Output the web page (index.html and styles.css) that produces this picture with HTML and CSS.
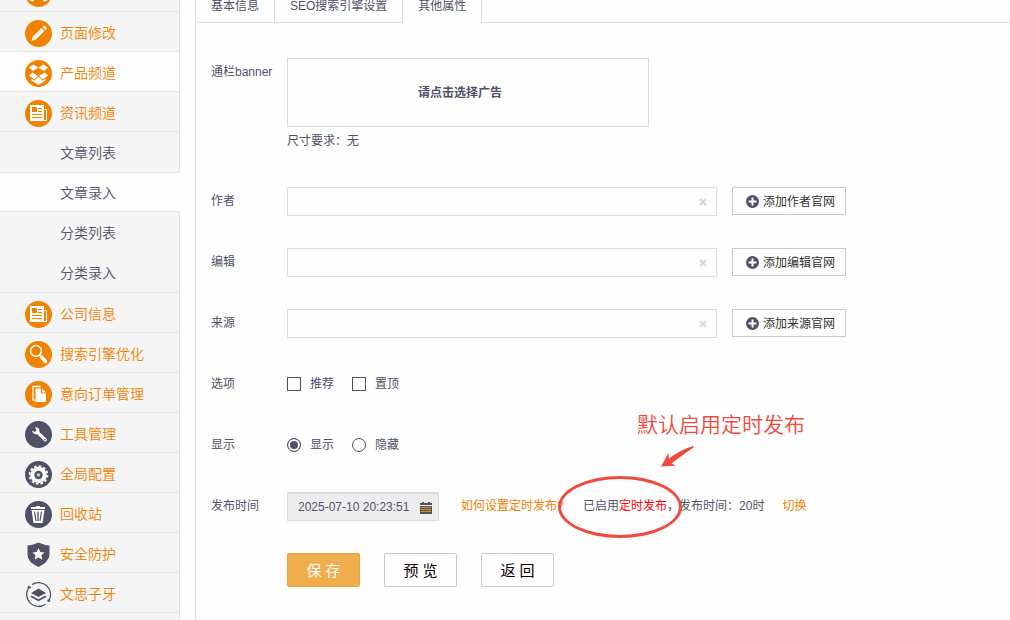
FILE: index.html
```html
<!DOCTYPE html>
<html lang="zh-CN">
<head>
    <meta charset="UTF-8">
    <meta name="viewport" content="width=device-width, initial-scale=1.0">
    <title>文章录入</title>
    <link rel="stylesheet" href="styles.css">
</head>
<body>
    <div class="page">
        <nav class="sidebar">
            <a class="nav-item" href="#">
                <svg class="nav-icon" viewBox="0 0 27 27"><circle cx="13.5" cy="13.5" r="13.5" fill="#ef8200"/><path d="M7 21l4-4h5l4 4M5 20h4M18 20h4" fill="none" stroke="#fff" stroke-width="2"/></svg>
            </a>
            <a class="nav-item" href="#">
                <svg class="nav-icon" viewBox="0 0 27 27"><circle cx="13.5" cy="13.5" r="13.5" fill="#ef8200"/><path d="M6.500 21l1-4.200L16.500 8l3 3-9 8.800zM17.500 7l1-1q.8-.6 1.600 0l1.300 1.300q.7.8 0 1.600l-1 1z" fill="#fff"/><path d="M9 17.500l8-8" stroke="#f7b868" stroke-width=".7"/><path d="M7.500 17l2.700 2.700" stroke="#ef8200" stroke-width=".5"/></svg>
                <span>页面修改</span>
            </a>
            <a class="nav-item nav-item-hover" href="#">
                <svg class="nav-icon" viewBox="0 0 27 27"><circle cx="13.5" cy="13.5" r="13.5" fill="#ef8200"/><path d="M8.500 4.500l5 3.200-5.500 3.300-4-3.500zM18.500 4.500l-5 3.200 5.500 3.300 4-3.500zM7.500 12.500l5.500 3.500-4 3.500-5-4zM19.500 12.500L14 16l4 3.500 5-4zM6.500 18.800l2.500 2 4.500-4 4.500 4 2.500-2v1.700l-7 4.500-7-4.500z" fill="#fff"/></svg>
                <span>产品频道</span>
            </a>
            <a class="nav-item" href="#">
                <svg class="nav-icon" viewBox="0 0 27 27"><circle cx="13.5" cy="13.5" r="13.5" fill="#ef8200"/><path d="M5 5h14v16H5z" fill="#fff"/><path d="M19.500 9.500h2V20.500H5" fill="none" stroke="#fff"/><path d="M7 7h5v5H7zM13 8h4v1h-4zM13 11h4v1h-4zM7 14h10v1H7zM7 17h10v1H7z" fill="#ef8200"/></svg>
                <span>资讯频道</span>
            </a>
            <div class="sub-menu">
                <a class="sub-item" href="#">文章列表</a>
                <a class="sub-item sub-item-active" href="#">文章录入</a>
                <a class="sub-item" href="#">分类列表</a>
                <a class="sub-item" href="#">分类录入</a>
            </div>
            <a class="nav-item" href="#">
                <svg class="nav-icon" viewBox="0 0 27 27"><circle cx="13.5" cy="13.5" r="13.5" fill="#ef8200"/><path d="M5 5h14v16H5z" fill="#fff"/><path d="M19.500 9.500h2V20.500H5" fill="none" stroke="#fff"/><path d="M7 7h5v5H7zM13 8h4v1h-4zM13 11h4v1h-4zM7 14h10v1H7zM7 17h10v1H7z" fill="#ef8200"/></svg>
                <span>公司信息</span>
            </a>
            <a class="nav-item" href="#">
                <svg class="nav-icon" viewBox="0 0 27 27"><circle cx="13.5" cy="13.5" r="13.5" fill="#ef8200"/><circle cx="11" cy="10" r="5.400" fill="none" stroke="#fff" stroke-width="1.500"/><path d="M14.500 14l3 3" stroke="#fff" stroke-width="1.500"/><path d="M16.500 16l4 4.500" stroke="#fff" stroke-width="3.500" stroke-linecap="round"/></svg>
                <span>搜索引擎优化</span>
            </a>
            <a class="nav-item" href="#">
                <svg class="nav-icon" viewBox="0 0 27 27"><circle cx="13.5" cy="13.5" r="13.5" fill="#ef8200"/><path d="M15.500 5.500H8v13.500h2" fill="none" stroke="#fff" stroke-width="1.300"/><path d="M10.500 7.500H16v5h5V21H10.500zM17 7.500l4 4h-4z" fill="#fff"/></svg>
                <span>意向订单管理</span>
            </a>
            <a class="nav-item" href="#">
                <svg class="nav-icon" viewBox="0 0 27 27"><circle cx="13.5" cy="13.5" r="13.5" fill="#4f5267"/><path d="M10 6.200q3.800-.2 4.500 3.300l-.2 1.500 7 6.500q1.200 1.300.2 2.500t-2.500 0L12.300 13.200Q8 14 7 9.500l3 1.500 1.600-1.800z" fill="#fff"/><circle cx="20" cy="18.800" r=".8" fill="#4f5267"/></svg>
                <span>工具管理</span>
            </a>
            <a class="nav-item" href="#">
                <svg class="nav-icon" viewBox="0 0 27 27"><circle cx="13.5" cy="13.5" r="13.5" fill="#4f5267"/><circle cx="13.5" cy="14" r="8.800" fill="none" stroke="#fff" stroke-width="2" stroke-dasharray="2.600 2"/><circle cx="13.5" cy="14" r="6.200" fill="none" stroke="#fff" stroke-width="4"/><circle cx="13.5" cy="14" r="1.800" fill="#c6c7cf"/></svg>
                <span>全局配置</span>
            </a>
            <a class="nav-item" href="#">
                <svg class="nav-icon" viewBox="0 0 27 27"><circle cx="13.5" cy="13.5" r="13.5" fill="#4f5267"/><path d="M6 6h5V5h4v1h5v2H6zM6.500 9h13l-2 13h-9z" fill="#fff"/><path d="M9.500 10.500l1.500 9.500M16.500 10.500L15 20" stroke="#4f5267" stroke-width="1.200"/><path d="M12 10.500h2V20h-2z" fill="#8b8d9b"/></svg>
                <span>回收站</span>
            </a>
            <a class="nav-item" href="#">
                <svg class="nav-icon" viewBox="0 0 27 27"><path d="M13.500 1.500Q19 4 24.500 4.500V14q-.5 7-11 12Q2.500 21 2.500 14V4.500Q8 4 13.500 1.500z" fill="#4f5267"/><path d="M13.500 7l1.800 3.900 4.200.5-3.100 2.900.8 4.200-3.700-2.100-3.700 2.100.8-4.200-3.100-2.900 4.200-.5z" fill="#fff"/></svg>
                <span>安全防护</span>
            </a>
            <a class="nav-item" href="#">
                <svg class="nav-icon" viewBox="0 0 27 27"><path d="M7 3.500a12 12 0 0 1 17.500 15M20.500 23.300A12 12 0 0 1 3.500 7" fill="none" stroke="#4f5267" stroke-width="1.300"/><circle cx="4.200" cy="6.300" r="1.500" fill="#4f5267"/><circle cx="23.800" cy="19.500" r="1.500" fill="#4f5267"/><path d="M13.500 7.500l7.500 4.500-7.500 4-7.500-4z" fill="#4f5267"/><path d="M6 15.300l7.500 4 7.500-4" fill="none" stroke="#4f5267" stroke-width="1.800"/></svg>
                <span>文思子牙</span>
            </a>
        </nav>

        <main class="main">
            <div class="tabs">
                <a class="tab" href="#">基本信息</a>
                <a class="tab" href="#">SEO搜索引擎设置</a>
                <a class="tab tab-active" href="#">其他属性</a>
            </div>

            <form class="form">
                <div class="form-row">
                    <span class="form-label">通栏banner</span>
                    <div>
                        <button type="button" class="banner-box">请点击选择广告</button>
                        <p class="hint">尺寸要求：无</p>
                    </div>
                </div>

                <div class="form-row">
                    <label class="form-label" for="author">作者</label>
                    <div class="input-wrap">
                        <input type="text" id="author" class="input">
                        <button type="button" class="clear" aria-label="清空"><svg viewBox="0 0 8 8"><path d="M1 1l6 6M7 1L1 7"/></svg></button>
                    </div>
                    <button type="button" class="btn-add"><svg class="plus" viewBox="0 0 13 13"><circle cx="6.5" cy="6.5" r="6.5"/><path d="M6.500 2.500v8M2.500 6.500h8"/></svg><span>添加作者官网</span></button>
                </div>

                <div class="form-row">
                    <label class="form-label" for="editor">编辑</label>
                    <div class="input-wrap">
                        <input type="text" id="editor" class="input">
                        <button type="button" class="clear" aria-label="清空"><svg viewBox="0 0 8 8"><path d="M1 1l6 6M7 1L1 7"/></svg></button>
                    </div>
                    <button type="button" class="btn-add"><svg class="plus" viewBox="0 0 13 13"><circle cx="6.5" cy="6.5" r="6.5"/><path d="M6.500 2.500v8M2.500 6.500h8"/></svg><span>添加编辑官网</span></button>
                </div>

                <div class="form-row">
                    <label class="form-label" for="source">来源</label>
                    <div class="input-wrap">
                        <input type="text" id="source" class="input">
                        <button type="button" class="clear" aria-label="清空"><svg viewBox="0 0 8 8"><path d="M1 1l6 6M7 1L1 7"/></svg></button>
                    </div>
                    <button type="button" class="btn-add"><svg class="plus" viewBox="0 0 13 13"><circle cx="6.5" cy="6.5" r="6.5"/><path d="M6.500 2.500v8M2.500 6.500h8"/></svg><span>添加来源官网</span></button>
                </div>

                <div class="form-row">
                    <span class="form-label">选项</span>
                    <label class="choice"><input type="checkbox" name="recommend">推荐</label>
                    <label class="choice"><input type="checkbox" name="top">置顶</label>
                </div>

                <div class="form-row">
                    <span class="form-label">显示</span>
                    <label class="choice"><input type="radio" name="show" value="1" checked>显示</label>
                    <label class="choice"><input type="radio" name="show" value="0">隐藏</label>
                </div>

                <div class="form-row">
                    <label class="form-label" for="publishTime">发布时间</label>
                    <div class="date-wrap">
                        <input type="text" id="publishTime" class="input input-date" value="2025-07-10 20:23:51">
                        <svg class="calendar" viewBox="0 0 12 12"><path d="M0 1h2V0h2v1h4V0h2v1h2v2H0z" fill="#4f5267"/><path d="M0 4h12v8H0z" fill="#5c5547"/><path d="M1 5.500h10M1 7.500h10M1 9.500h10" stroke="#e0a04a" stroke-width=".8"/></svg>
                    </div>
                    <a class="link link-help" href="#">如何设置定时发布?</a>
                    <div class="status">
                        已启用<span class="status-on">定时发布</span>，发布时间：20时
                        <div class="callout-text">默认启用定时发布</div>
                        <svg class="callout-arrow" viewBox="0 0 34 22"><path d="M0 20.500L7.500 7l.5 5.500Q19 4 32 0q1.500 0 .5 1.500Q23 8 10.500 17.500l4.500 2z"/></svg>
                        <div class="callout-ring"></div>
                    </div>
                    <a class="link" href="#">切换</a>
                </div>

                <div class="form-row form-actions">
                    <button type="submit" class="btn btn-save">保 存</button>
                    <button type="button" class="btn">预 览</button>
                    <button type="button" class="btn">返 回</button>
                </div>
            </form>
        </main>
    </div>
</body>
</html>
```
FILE: styles.css
```css
* {
    box-sizing: border-box;
}
body {
    margin: 0;
    height: 100vh;
    overflow: hidden;
    font-family: "Liberation Sans", "Noto Sans CJK SC", sans-serif;
    font-size: 12px;
    color: #4f5267;
    background-color: #fefefe;
}
a {
    text-decoration: none;
}
button, input {
    font-family: inherit;
    margin: 0;
}
/* the page is scrolled down a little */
.page {
    display: flex;
    gap: 15px;
    min-height: calc(100vh + 28px);
    margin-top: -28px;
}

/* sidebar */
.sidebar {
    flex: none;
    width: 180px;
    background-color: #f5f5f5;
    border-right: 1px solid #e2e2e2;
    font-size: 14px;
    font-weight: 350;
}
.nav-item {
    display: flex;
    align-items: center;
    gap: 8px;
    height: 40px;
    padding: 3px 0 0 25px;
    border-bottom: 1px solid #e2e2e2;
    color: #ef8200;
}
.nav-item span {
    padding-bottom: 2px;
}
.nav-item-hover {
    background-color: #fefefe;
}
.nav-icon {
    width: 27px;
    height: 27px;
}
.sub-menu {
    border-bottom: 1px solid #e2e2e2;
}
.sub-item {
    display: flex;
    align-items: center;
    height: 40px;
    padding-left: 60px;
    color: #4f5267;
}
.sub-item-active {
    margin-right: -1px;
    background-color: #fefefe;
    border-top: 1px solid #e2e2e2;
    border-bottom: 1px solid #e2e2e2;
}

/* content */
.main {
    flex: 1;
    padding-top: 16px;
    border-left: 1px solid #dcdcdc;
}
.tabs {
    display: flex;
    border-bottom: 1px solid #dcdcdc;
}
.tab {
    height: 34px;
    padding: 0 15px;
    border-right: 1px solid #dcdcdc;
    line-height: 36px;
    color: #4f5267;
}
.tab-active {
    height: 35px;
    margin-bottom: -1px;
    background-color: #fefefe;
}
.form {
    display: flex;
    flex-direction: column;
    gap: 32px;
    padding: 35px 15px 32px;
}
.form-row {
    display: flex;
    align-items: flex-start;
    min-height: 29px;
    line-height: 28px;
    white-space: nowrap;
}
.form-label {
    flex: none;
    width: 76px;
}
.banner-box {
    display: block;
    width: 362px;
    height: 69px;
    border: 1px solid #dcdcdc;
    background-color: #fefefe;
    font-size: 12px;
    font-weight: bold;
    color: #4f5267;
    padding: 0 16px 2px 0;
}
.hint {
    margin: 0;
}
.input-wrap {
    position: relative;
    flex: 0 1 430px;
    margin-right: 15px;
}
.input {
    display: block;
    width: 100%;
    height: 29px;
    padding: 0 24px 0 10px;
    border: 1px solid #dcdcdc;
    background-color: #fefefe;
    font-size: 12px;
    color: #4f5267;
}
.clear {
    position: absolute;
    top: 0;
    right: 10px;
    display: flex;
    align-items: center;
    height: 29px;
    padding: 0;
    border: none;
    background: none;
}
.clear svg {
    width: 8px;
    height: 8px;
    stroke: #d8d8d8;
    stroke-width: 2;
}
.btn-add {
    display: flex;
    align-items: center;
    justify-content: center;
    gap: 4px;
    width: 114px;
    height: 28px;
    padding: 0 0 0 3px;
    border: 1px solid #c8c8c8;
    background-color: #fefefe;
    font-size: 12px;
    color: #333;
}
.btn-add span {
    padding-bottom: 2px;
}
.plus {
    width: 13px;
    height: 13px;
    fill: #4f5267;
}
.plus path {
    stroke: #fff;
    stroke-width: 2;
}
.choice {
    display: flex;
    align-items: center;
    gap: 9px;
    margin-right: 18px;
}
.choice input {
    appearance: none;
    width: 14px;
    height: 14px;
    border: 1px solid #4f5267;
    background-color: #fefefe;
}
.choice input[type="radio"] {
    border-radius: 50%;
}
.choice input[type="radio"]:checked {
    background-color: #4f5267;
    box-shadow: inset 0 0 0 2px #fefefe;
}
.date-wrap {
    position: relative;
    width: 152px;
    margin-right: 22px;
}
.input-date {
    border-top-width: 2px;
    background-color: #ededed;
}
.calendar {
    position: absolute;
    top: 10px;
    right: 7px;
    width: 12px;
    height: 12px;
}
.link {
    color: #ef8200;
}
.link-help {
    width: 122px;
}
.status {
    position: relative;
    margin-right: 18px;
}
.status-on {
    color: #f00;
}

/* callout over the status */
.callout-text {
    position: absolute;
    top: -83px;
    left: 54px;
    font-size: 21px;
    font-weight: 350;
    line-height: 32px;
    color: #f04a3e;
}
.callout-arrow {
    position: absolute;
    top: -46px;
    left: 78px;
    width: 34px;
    height: 22px;
    fill: #f04a3e;
}
.callout-ring {
    position: absolute;
    top: -16px;
    left: -25px;
    width: 124px;
    height: 62px;
    border: 3px solid #f04a3e;
    border-radius: 50%;
}
.form-actions {
    gap: 24px;
    padding-left: 76px;
}
.btn {
    width: 73px;
    height: 34px;
    padding: 0 0 2px;
    border: 1px solid #c8c8c8;
    border-radius: 2px;
    background-color: #fefefe;
    font-size: 15px;
    color: #000;
}
.btn-save {
    border-color: #eea236;
    background-color: #f0ad4e;
    color: #fff;
}
```
